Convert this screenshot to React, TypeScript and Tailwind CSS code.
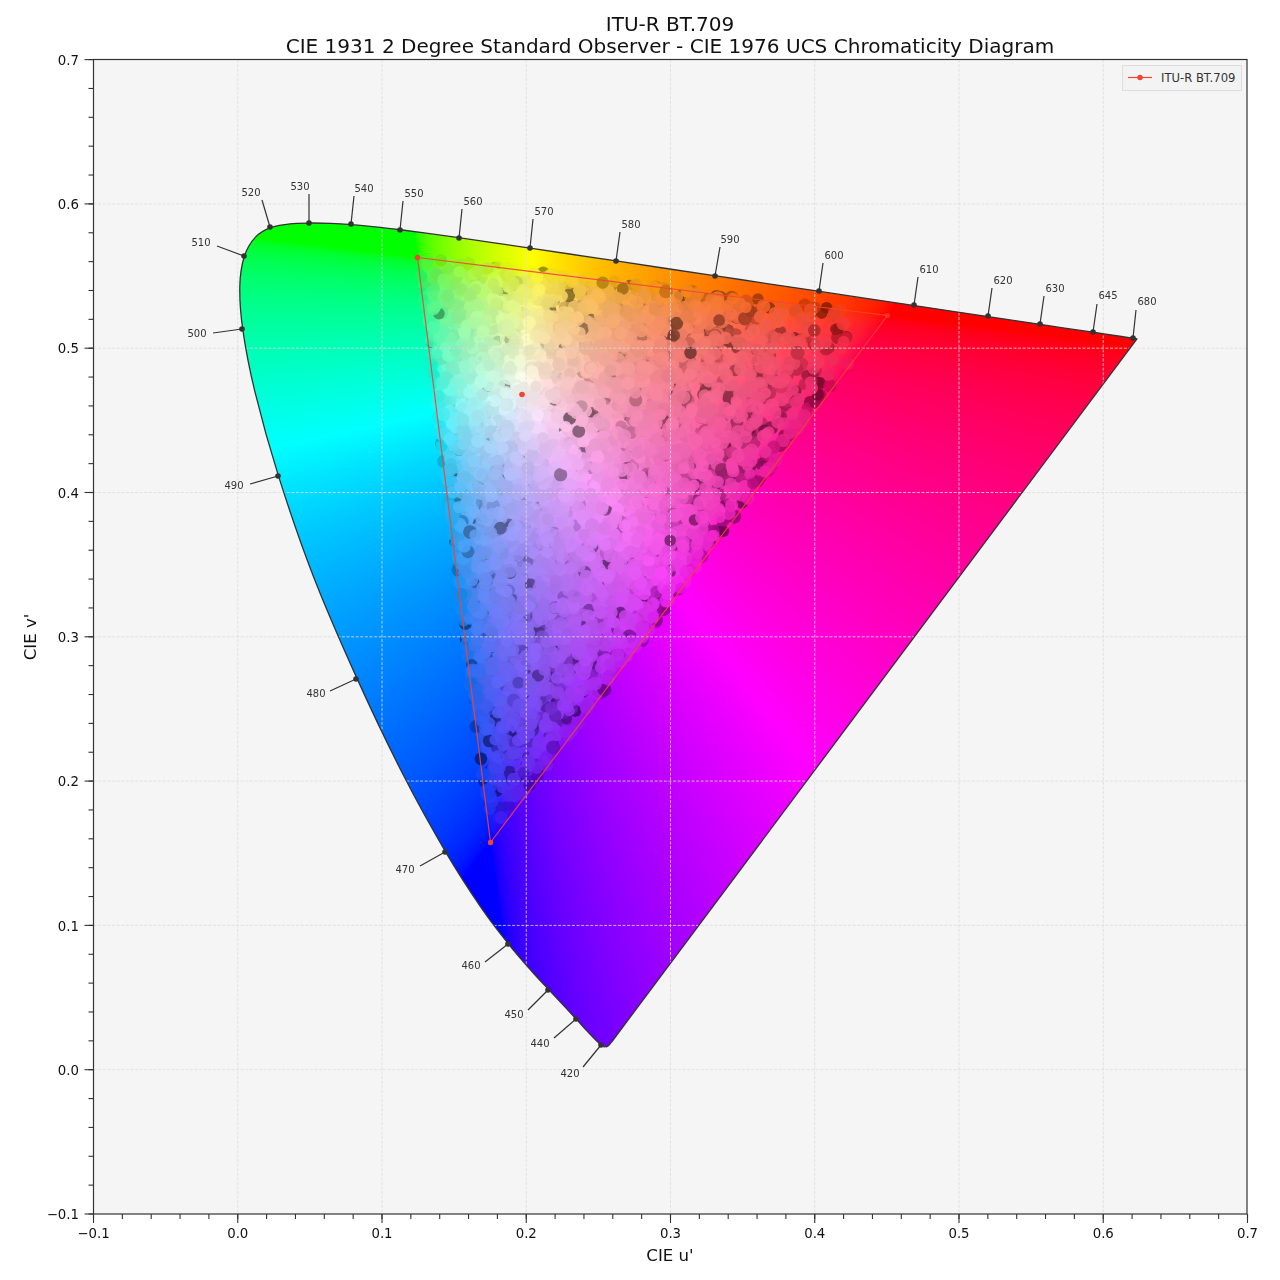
import { useEffect, useRef } from "react";

// CIE 1931 2 degree spectral locus, xy every 5nm from 380 to 650, then 680
const LOCUS_XY: [number, number][] = [
  [0.1741, 0.005], [0.174, 0.005], [0.1738, 0.0049], [0.1736, 0.0049], [0.1733, 0.0048],
  [0.173, 0.0048], [0.1726, 0.0048], [0.1721, 0.0048], [0.1714, 0.0051], [0.1703, 0.0058],
  [0.1689, 0.0069], [0.1669, 0.0086], [0.1644, 0.0109], [0.1611, 0.0138], [0.1566, 0.0177],
  [0.151, 0.0227], [0.144, 0.0297], [0.1355, 0.0399], [0.1241, 0.0578], [0.1096, 0.0868],
  [0.0913, 0.1327], [0.0687, 0.2007], [0.0454, 0.295], [0.0235, 0.4127], [0.0082, 0.5384],
  [0.0039, 0.6548], [0.0139, 0.7502], [0.0389, 0.812], [0.0743, 0.8338], [0.1142, 0.8262],
  [0.1547, 0.8059], [0.1929, 0.7816], [0.2296, 0.7543], [0.2658, 0.7243], [0.3016, 0.6923],
  [0.3373, 0.6589], [0.3731, 0.6245], [0.4087, 0.5896], [0.4441, 0.5547], [0.4788, 0.5202],
  [0.5125, 0.4866], [0.5448, 0.4544], [0.5752, 0.4242], [0.6029, 0.3965], [0.627, 0.3725],
  [0.6482, 0.3514], [0.6658, 0.334], [0.6801, 0.3197], [0.6915, 0.3083], [0.7006, 0.2993],
  [0.7079, 0.292], [0.714, 0.2859], [0.719, 0.2809], [0.723, 0.277], [0.726, 0.274],
  [0.7347, 0.2653],
];

const px = (u: number) => 237.75 + u * 1442.5;
const py = (v: number) => 1069.7 - v * 1443;
const toU = (x: number) => (x - 237.75) / 1442.5;
const toV = (y: number) => (1069.7 - y) / 1443;

function locusPath() {
  const pts = LOCUS_XY.map(([x, y]) => {
    const d = -2 * x + 12 * y + 3;
    return [px((4 * x) / d), py((9 * y) / d)];
  });
  // the purple line meets the locus in a small rounded corner
  pts.unshift([612, 1041.5], [609.5, 1044.6]);
  let d = `M${pts[0][0].toFixed(2)} ${pts[0][1].toFixed(2)}`;
  for (let i = 0; i < pts.length - 1; i++) {
    const p0 = pts[Math.max(i - 1, 0)];
    const p1 = pts[i];
    const p2 = pts[i + 1];
    const p3 = pts[Math.min(i + 2, pts.length - 1)];
    const c1x = p1[0] + (p2[0] - p0[0]) / 6;
    const c1y = p1[1] + (p2[1] - p0[1]) / 6;
    const c2x = p2[0] - (p3[0] - p1[0]) / 6;
    const c2y = p2[1] - (p3[1] - p1[1]) / 6;
    d += `C${c1x.toFixed(2)} ${c1y.toFixed(2)} ${c2x.toFixed(2)} ${c2y.toFixed(2)} ${p2[0].toFixed(2)} ${p2[1].toFixed(2)}`;
  }
  return d + "Z";
}

const LOCUS = locusPath();

function encode(c: number) {
  const v = c <= 0.0031308 ? 12.92 * c : 1.055 * Math.pow(c, 1 / 2.4) - 0.055;
  return Math.round(Math.min(1, Math.max(0, v)) * 255);
}

// chromaticity to linear sRGB, normalised on the largest channel
function linearAt(u: number, v: number): [number, number, number] {
  const d = 6 * u - 16 * v + 12;
  const x = (9 * u) / d;
  const y = (4 * v) / d;
  const X = x / y;
  const Z = (1 - x - y) / y;
  const r = Math.max(0, 3.2406 * X - 1.5372 - 0.4986 * Z);
  const g = Math.max(0, -0.9689 * X + 1.8758 + 0.0415 * Z);
  const b = Math.max(0, 0.0557 * X - 0.204 + 1.057 * Z);
  const m = Math.max(r, g, b, 1e-6);
  return [r / m, g / m, b / m];
}

type Blob = { x: number; y: number; r: number; color: string; under: boolean };

function paint(canvas: HTMLCanvasElement) {
  const ctx = canvas.getContext("2d");
  if (!ctx) return;
  const off = document.createElement("canvas");
  off.width = 1280;
  off.height = 1280;
  const octx = off.getContext("2d")!;
  const img = octx.createImageData(1280, 1280);
  for (let j = 200; j < 1060; j++) {
    for (let i = 225; i < 1150; i++) {
      const [r, g, b] = linearAt(toU(i + 0.5), toV(j + 0.5));
      const k = (j * 1280 + i) * 4;
      img.data[k] = encode(r);
      img.data[k + 1] = encode(g);
      img.data[k + 2] = encode(b);
      img.data[k + 3] = 255;
    }
  }
  octx.putImageData(img, 0, 0);
  ctx.save();
  ctx.clip(new Path2D(LOCUS));
  ctx.drawImage(off, 0, 0);

  // pixels of the test image, scattered over the BT.709 triangle
  let seed = 709;
  const rnd = () => {
    seed = (seed + 0x6d2b79f5) | 0;
    let t = Math.imul(seed ^ (seed >>> 15), 1 | seed);
    t = (t + Math.imul(t ^ (t >>> 7), 61 | t)) ^ t;
    return ((t ^ (t >>> 14)) >>> 0) / 4294967296;
  };
  const A = [417, 257];
  const B = [888, 315];
  const C = [490, 842];
  const blobs: Blob[] = [];
  let guard = 0;
  while (blobs.length < 4400 && guard < 60000) {
    guard++;
    let a = rnd();
    let b = rnd();
    if (a + b > 1) {
      a = 1 - a;
      b = 1 - b;
    }
    const x = A[0] + a * (B[0] - A[0]) + b * (C[0] - A[0]);
    const y = A[1] + a * (B[1] - A[1]) + b * (C[1] - A[1]);
    // thinner towards the red corner and the blue tip
    if (a > 0.55 && rnd() < (a - 0.55) * 2.4) continue;
    if (b > 0.7 && rnd() < (b - 0.7) * 2.5) continue;
    const [r, g, bl] = linearAt(toU(x), toV(y));
    const sat = 1 - Math.min(r, g, bl);
    const bias = Math.min(1, a * 1.1 + b * 0.8);
    const roll = rnd();
    const darkChance = 0.015 + 0.2 * sat * bias;
    const midChance = darkChance + 0.3 * sat * bias;
    let f = 0.8 + rnd() * 0.2 * (1 - 0.4 * sat * bias);
    if (roll < darkChance) f = 0.14 + rnd() * 0.22;
    else if (roll < midChance) f = 0.42 + rnd() * 0.25;
    const lift = roll < midChance ? 0 : 0.06;
    const cr = encode(r * f) * (1 - lift) + 255 * lift;
    const cg = encode(g * f) * (1 - lift) + 255 * lift;
    const cb = encode(bl * f) * (1 - lift) + 255 * lift;
    blobs.push({
      x,
      y,
      r: 5.6 + rnd() * 1.4,
      color: `rgba(${Math.round(cr)},${Math.round(cg)},${Math.round(cb)},0.85)`,
      under: roll < midChance && rnd() < 0.88,
    });
  }
  // most of the dark ones end up under the bright ones
  const ordered = [...blobs.filter((b) => b.under), ...blobs.filter((b) => !b.under)];
  for (const b of ordered) {
    ctx.fillStyle = b.color;
    ctx.beginPath();
    ctx.arc(b.x, b.y, b.r, 0, Math.PI * 2);
    ctx.fill();
  }
  ctx.restore();
}

// dot, end of the leader line, centre of the label, all in page pixels
const WAVELENGTHS: [string, number, number, number, number, number, number][] = [
  ["420", 601, 1045, 583, 1067, 570, 1073],
  ["440", 576, 1019, 554, 1038, 540, 1043],
  ["450", 548, 990, 528, 1010, 514, 1014],
  ["460", 508, 944, 485, 962, 471, 965],
  ["470", 445, 852, 420, 866, 405, 869],
  ["480", 356, 679, 330, 691, 316, 693],
  ["490", 278, 476, 250, 484, 234, 485],
  ["500", 242, 329, 213, 333, 197, 333],
  ["510", 244, 256, 217, 246, 201, 242],
  ["520", 270, 227, 262, 200, 251, 192],
  ["530", 309, 223, 309, 194, 300, 186],
  ["540", 351, 224, 354, 196, 364, 188],
  ["550", 400, 230, 403, 201, 414, 193],
  ["560", 459, 238, 462, 209, 473, 201],
  ["570", 530, 248, 533, 219, 544, 211],
  ["580", 616, 261, 620, 232, 631, 224],
  ["590", 715, 276, 720, 247, 730, 239],
  ["600", 819, 291, 823, 263, 834, 255],
  ["610", 914, 305, 918, 277, 929, 269],
  ["620", 988, 316, 992, 288, 1003, 280],
  ["630", 1040, 324, 1044, 296, 1055, 288],
  ["645", 1093, 332, 1097, 304, 1108, 295],
  ["680", 1133, 338, 1136, 310, 1147, 301],
];

const MAJOR = [-0.1, 0, 0.1, 0.2, 0.3, 0.4, 0.5, 0.6, 0.7];
const MINOR = Array.from({ length: 41 }, (_, i) => -0.1 + i * 0.02);
const tickLabel = (t: number) => (t < 0 ? "\u22120.1" : t.toFixed(1));

const RED = "#f44336";

export default function App() {
  const ref = useRef<HTMLCanvasElement>(null);

  useEffect(() => {
    if (ref.current) paint(ref.current);
  }, []);

  return (
    <div className="relative w-[1280px] h-[1280px] bg-white overflow-hidden font-['DejaVu_Sans',sans-serif]">
      <div className="absolute left-[93.5px] top-[59.5px] w-[1153.5px] h-[1154.5px] bg-[#f5f5f5]" />
      <canvas ref={ref} width={1280} height={1280} className="absolute inset-0" />
      <svg width={1280} height={1280} viewBox="0 0 1280 1280" className="absolute inset-0">
        {/* grid */}
        <g stroke="#dcdcdc" strokeWidth={0.8} strokeDasharray="3 1.6">
          {MAJOR.slice(1, -1).map((t) => (
            <line key={t} x1={px(t)} x2={px(t)} y1={59.5} y2={1214} />
          ))}
          {MAJOR.slice(1, -1).map((t) => (
            <line key={t} y1={py(t)} y2={py(t)} x1={93.5} x2={1247} />
          ))}
        </g>

        <path d={LOCUS} fill="none" stroke="#333333" strokeWidth={1.3} strokeLinejoin="round" />

        {/* wavelengths */}
        {WAVELENGTHS.map(([label, dx, dy, ex, ey, lx, ly]) => (
          <g key={label}>
            <line x1={dx} y1={dy} x2={ex} y2={ey} stroke="#333333" strokeWidth={1.2} />
            <circle cx={dx} cy={dy} r={2.8} fill="#333333" />
            <text x={lx} y={ly} fontSize={10} fill="#333333" textAnchor="middle" dominantBaseline="central">
              {label}
            </text>
          </g>
        ))}

        {/* BT.709 gamut */}
        <polygon points="417.5,257.5 887.5,315.5 490.5,842.5" fill="none" stroke={RED} strokeOpacity={0.9} strokeWidth={1.2} />
        <circle cx={417.5} cy={257.5} r={2.7} fill={RED} />
        <circle cx={887.5} cy={315.5} r={2.7} fill={RED} fillOpacity={0.6} />
        <circle cx={490.5} cy={842.5} r={2.7} fill={RED} />
        <circle cx={522} cy={394.5} r={2.8} fill={RED} />

        {/* axes */}
        <rect x={93.5} y={59.5} width={1153.5} height={1154.5} fill="none" stroke="#333333" strokeWidth={1.2} />
        <g stroke="#333333" strokeWidth={1.1}>
          {MINOR.map((t) => (
            <line key={t} x1={px(t)} x2={px(t)} y1={1214} y2={1219} />
          ))}
          {MINOR.map((t) => (
            <line key={t} x1={88.5} x2={93.5} y1={py(t)} y2={py(t)} />
          ))}
          {MAJOR.map((t) => (
            <line key={t} x1={px(t)} x2={px(t)} y1={1214} y2={1223} />
          ))}
          {MAJOR.map((t) => (
            <line key={t} x1={84.5} x2={93.5} y1={py(t)} y2={py(t)} />
          ))}
        </g>
        <g fontSize={13.3} fill="#111111">
          {MAJOR.map((t) => (
            <text key={t} x={px(t)} y={1233} textAnchor="middle" dominantBaseline="central">
              {tickLabel(t)}
            </text>
          ))}
          {MAJOR.map((t) => (
            <text key={t} x={79} y={py(t) + 0.6} textAnchor="end" dominantBaseline="central">
              {tickLabel(t)}
            </text>
          ))}
        </g>

        {/* titles */}
        <g fill="#111111" textAnchor="middle">
          <text x={670} y={24} fontSize={20.05} dominantBaseline="central">ITU-R BT.709</text>
          <text x={670} y={46} fontSize={20.05} dominantBaseline="central">CIE 1931 2 Degree Standard Observer - CIE 1976 UCS Chromaticity Diagram</text>
          <text x={670} y={1255} fontSize={16.6} dominantBaseline="central">CIE u'</text>
          <text x={30} y={637} fontSize={16.6} dominantBaseline="central" transform="rotate(-90 30 637)">CIE v'</text>
        </g>

        {/* legend */}
        <rect x={1122.5} y={65.5} width={119} height={25} fill="#f3f3f3" stroke="#dddddd" strokeWidth={1} />
        <line x1={1128} x2={1152} y1={77.5} y2={77.5} stroke={RED} strokeWidth={1.2} />
        <circle cx={1140} cy={77.5} r={2.7} fill={RED} />
        <text x={1161} y={77.5} fontSize={11.6} fill="#333333" dominantBaseline="central">ITU-R BT.709</text>
      </svg>
    </div>
  );
}
